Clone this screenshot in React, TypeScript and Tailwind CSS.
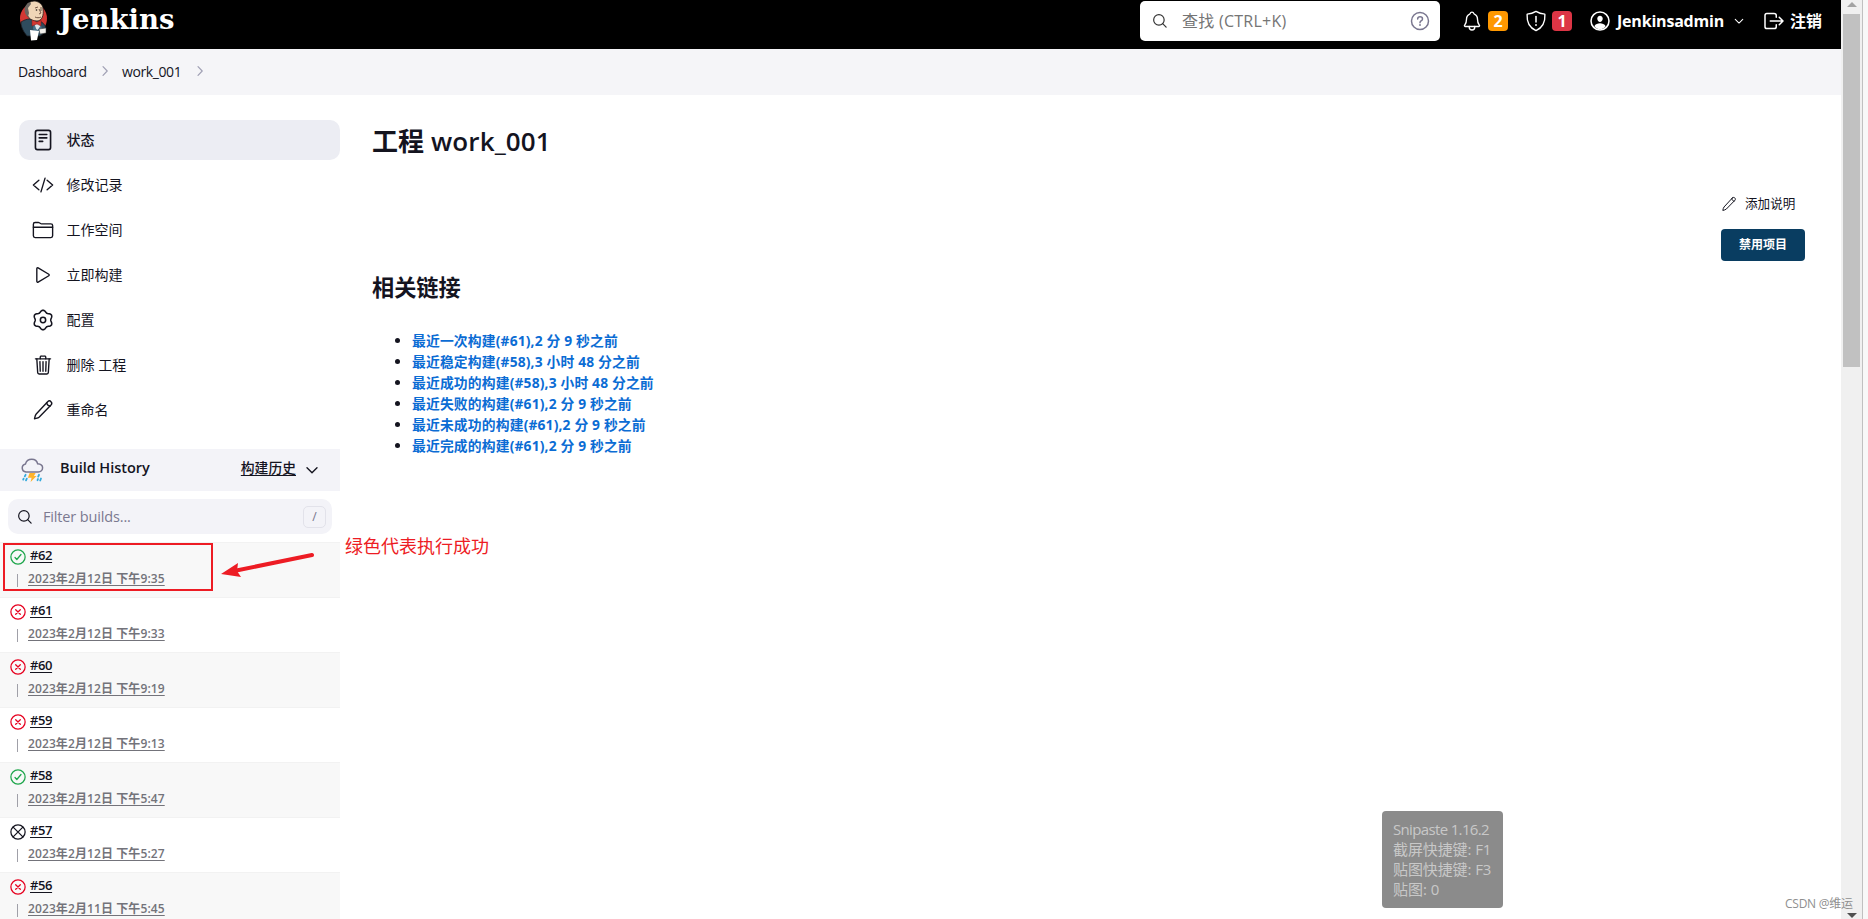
import type { ReactNode } from "react";
import { clsx } from "clsx";

type BuildStatus = "success" | "failed" | "aborted";

const tasks = [
  { label: "状态", icon: "status", active: true },
  { label: "修改记录", icon: "changes" },
  { label: "工作空间", icon: "folder" },
  { label: "立即构建", icon: "play" },
  { label: "配置", icon: "gear" },
  { label: "删除 工程", icon: "trash" },
  { label: "重命名", icon: "pencil" },
];

const builds: { id: string; date: string; status: BuildStatus }[] = [
  { id: "#62", date: "2023年2月12日 下午9:35", status: "success" },
  { id: "#61", date: "2023年2月12日 下午9:33", status: "failed" },
  { id: "#60", date: "2023年2月12日 下午9:19", status: "failed" },
  { id: "#59", date: "2023年2月12日 下午9:13", status: "failed" },
  { id: "#58", date: "2023年2月12日 下午5:47", status: "success" },
  { id: "#57", date: "2023年2月12日 下午5:27", status: "aborted" },
  { id: "#56", date: "2023年2月11日 下午5:45", status: "failed" },
];

const links = [
  "最近一次构建(#61),2 分 9 秒之前",
  "最近稳定构建(#58),3 小时 48 分之前",
  "最近成功的构建(#58),3 小时 48 分之前",
  "最近失败的构建(#61),2 分 9 秒之前",
  "最近未成功的构建(#61),2 分 9 秒之前",
  "最近完成的构建(#61),2 分 9 秒之前",
];

// six-lobed outline of the settings gear
const gearPoints = Array.from({ length: 72 }, (_, i) => {
  const angle = (i * Math.PI) / 36;
  const radius = 204 - 24 * Math.cos(6 * angle);
  return `${(256 + radius * Math.cos(angle)).toFixed(1)},${(256 + radius * Math.sin(angle)).toFixed(1)}`;
}).join(" ");

function Symbol({ className, children, strokeWidth = 32 }: { className?: string; children: ReactNode; strokeWidth?: number }) {
  return (
    <svg
      viewBox="0 0 512 512"
      fill="none"
      stroke="currentColor"
      strokeWidth={strokeWidth}
      strokeLinecap="round"
      strokeLinejoin="round"
      className={clsx("shrink-0", className)}
    >
      {children}
    </svg>
  );
}

const shapes: Record<string, ReactNode> = {
  status: (
    <>
      <rect x="80" y="32" width="352" height="448" rx="48" strokeWidth="38" />
      <path d="M168 128h176M168 208h176M168 288h80" strokeWidth="38" />
    </>
  ),
  changes: <path d="M160 368L32 256l128-112M352 368l128-112-128-112M304 96l-96 320" />,
  folder: (
    <>
      <path d="M440 432H72a40 40 0 01-40-40V120a40 40 0 0140-40h75.89a40 40 0 0122.19 6.72l27.84 18.56a40 40 0 0022.19 6.72H440a40 40 0 0140 40v240a40 40 0 01-40 40z" />
      <path d="M32 192h448" />
    </>
  ),
  play: <path d="M112 111v290c0 17.44 17 28.52 31 20.16l247.9-148.37c12.12-7.25 12.12-26.33 0-33.58L143 90.84c-14-8.36-31 2.72-31 20.16z" strokeMiterlimit="10" />,
  gear: (
    <>
      <polygon points={gearPoints} strokeWidth="36" />
      <circle cx="256" cy="256" r="62" strokeWidth="36" />
    </>
  ),
  trash: (
    <>
      <path d="M112 112l20 320c.95 18.49 14.4 32 32 32h184c18.67 0 31-13.51 32-32l20-320" />
      <path d="M80 112h352M256 176v224M184 176l8 224M328 176l-8 224" />
      <path d="M192 112V72a23.93 23.93 0 0124-24h80a23.93 23.93 0 0124 24v40" />
    </>
  ),
  pencil: (
    <>
      <path d="M364 62c30-27 58-22 78 0 22 22 26 50 0 78L170 418c-30 28-70 30-112 44 12-44 12-82 40-112L364 62z" />
      <path d="M345 84c0 46 36 78 80 78" />
    </>
  ),
  chevronRight: <path d="M184 96l152 160-152 160" strokeWidth="44" />,
  chevronDown: <path d="M96 184l160 160 160-160" strokeWidth="44" />,
  search: (
    <>
      <circle cx="221" cy="221" r="168" strokeWidth="38" />
      <path d="M342 342L452 452" strokeWidth="38" />
    </>
  ),
  logout: (
    <path d="M304 336v40a40 40 0 01-40 40H104a40 40 0 01-40-40V136a40 40 0 0140-40h152c22.09 0 48 17.91 48 40v40M368 336l80-80-80-80M176 256h256" />
  ),
  bell: (
    <>
      <path d="M427.68 351.43C402 320 383.87 304 383.87 217.35 383.87 138 343.35 109.73 310 96c-4.43-1.82-8.6-6-9.95-10.55C294.2 65.54 277.8 48 256 48s-38.21 17.55-44 37.47c-1.35 4.6-5.52 8.71-9.95 10.53-33.39 13.75-73.87 41.92-73.87 121.35C128.13 304 110 320 84.32 351.43 73.68 364.45 83 384 101.61 384h308.88c18.51 0 27.77-19.61 17.19-32.57z" />
      <path d="M320 384v16a64 64 0 01-128 0v-16" />
    </>
  ),
  shield: (
    <>
      <path d="M463 112l-2-17c-78-6-145-27-205-63-60 36-127 57-205 63l-2 17c-9 167 54 302 207 368 153-66 216-201 207-368z" />
      <path d="M256 150v130" strokeWidth="36" />
      <circle cx="256" cy="348" r="22" fill="currentColor" stroke="none" />
    </>
  ),
};

function Icon({ name, className }: { name: string; className?: string }) {
  return <Symbol className={className}>{shapes[name]}</Symbol>;
}

function StatusIcon({ status }: { status: BuildStatus }) {
  const color = {
    success: "text-[#1ea64b]",
    failed: "text-[#e6001f]",
    aborted: "text-[#14141f]",
  }[status];

  return (
    <Symbol className={clsx("h-4 w-4", color)} strokeWidth={40}>
      <circle cx="256" cy="256" r="228" />
      {status === "success" && <path d="M352 176L218 336l-58-64" />}
      {status === "failed" && <path d="M330 330L182 182M330 182L182 330" />}
      {status === "aborted" && <path d="M412 412L100 100M412 100L100 412" />}
    </Symbol>
  );
}

function Butler() {
  return (
    <svg viewBox="0 0 30 41" className="h-[41px] w-[30px]">
      <ellipse cx="15.5" cy="18.5" rx="13.5" ry="15" fill="#d33833" />
      <path d="M3 22c3-2 6-3 9-3l9 2c4 1 6 4 7 7l-2 5-4 3H9c-3-4-6-8-6-14z" fill="#2f4c5e" stroke="#1a2026" strokeWidth=".8" />
      <path d="M14 20l5 3 3-1 1 5-3 3-3-1z" fill="#dfe6ea" />
      <path d="M16 23l3 8 4-6 1 5-5 4-4-5z" fill="#49728b" />
      <path d="M8 9c0-5 4-8 9-8 5 1 8 4 8 8 1 6-1 12-6 12-7 0-11-5-11-12z" fill="#f0d6b7" stroke="#241f1c" strokeWidth=".8" />
      <path d="M9 4c-3 3-3 7-1 11l2 2 1-4-1-5 3-4c0-2-3-2-4 0z" fill="#6b6560" />
      <path d="M17 8l3-1M22 8l2 0M21 9l2 4-2 1M17 17c2 1 4 1 6 0" fill="none" stroke="#54372a" strokeWidth=".8" />
      <circle cx="18.5" cy="10" r=".8" fill="#241f1c" />
      <circle cx="23" cy="10" r=".7" fill="#241f1c" />
      <path d="M14 20l5 2 4-2v6l-4-2-5 2z" fill="#d33833" stroke="#801b18" strokeWidth=".5" />
      <path d="M12 30l9 1-2 9-6 .5z" fill="#fff" />
      <path d="M21 29l7-1v5l-6 1z" fill="#f2f0eb" stroke="#333" strokeWidth=".5" />
    </svg>
  );
}

function StormIcon() {
  return (
    <svg viewBox="0 0 24 24" fill="none" className="h-6 w-6">
      <path
        d="M6 14a4.1 4.1 0 01-.5-8.1C6.2 3.1 8.5 1.2 11.8 1.2c3.1 0 5.2 1.9 5.8 4.5 3 .2 5 1.8 5 4.1S20.8 14 18.2 14z"
        stroke="#79768f"
        strokeWidth="1.5"
      />
      <path d="M9.6 15h6l-1.6 3h2.6l-6 6 1-4.2H7.9z" fill="#feb32b" />
      <path d="M5.6 16.8l-.8 1.6M6.8 20.6l-.8 1.8M3.6 20.6l-.4 1M19 16.8l-.8 1.8M21 20.5l-.8 2M18 21l-.5 1.2" stroke="#34aadc" strokeWidth="1.8" strokeLinecap="round" />
    </svg>
  );
}

function Header() {
  return (
    <header className="flex h-[49px] items-start justify-between bg-black text-white">
      <div className="flex pl-[18px]">
        <Butler />
        <span className="pt-px pl-[11px] font-['DejaVu_Serif',serif] text-[27.5px] leading-[36px] font-bold">
          Jenkins
        </span>
      </div>
      <div className="flex h-[41px] items-center pt-px pr-[19px]">
        <div className="flex h-10 w-[300px] items-center rounded-[5px] bg-white pr-[10px] pl-3 text-[#333]">
          <Icon name="search" className="h-4 w-4" />
          <span className="grow pl-[14px] text-[16px] tracking-[0.25px] text-[#757575]">查找 (CTRL+K)</span>
          <Symbol className="h-5 w-5 text-[#79768f]" strokeWidth={38}>
            <circle cx="256" cy="256" r="218" />
            <path d="M196 204c2-36 30-56 62-56 36 0 62 22 62 54 0 28-18 40-36 52-20 14-28 22-28 46" />
            <circle cx="256" cy="358" r="24" fill="currentColor" stroke="none" />
          </Symbol>
        </div>
        <Icon name="bell" className="ml-[21px] h-[22px] w-[22px]" />
        <span className="ml-[5px] flex h-5 w-5 items-center justify-center rounded-[4px] bg-[#ff9800] text-[16px] font-bold">2</span>
        <Icon name="shield" className="ml-[17px] h-[22px] w-[22px]" />
        <span className="ml-[5px] flex h-5 w-5 items-center justify-center rounded-[4px] bg-[#dc3545] text-[16px] font-bold">1</span>
        <Symbol className="ml-[18px] h-5 w-5" strokeWidth={40}>
          <circle cx="256" cy="256" r="230" />
          <path d="M256 120c42 0 74 34 70 80-3 44-34 80-70 80s-67-36-70-80c-4-46 28-80 70-80zM110 390c30-60 90-78 146-78s116 18 146 78c-40 50-90 76-146 76s-106-26-146-76z" fill="currentColor" stroke="none" />
        </Symbol>
        <span className="ml-[7px] w-[107px] text-[16px] font-bold tracking-[-0.2px]">Jenkinsadmin</span>
        <Icon name="chevronDown" className="ml-[9px] h-3 w-3" />
        <Icon name="logout" className="ml-[17px] h-[24px] w-[24px]" />
        <span className="ml-[4px] w-8 text-[16px] font-bold">注销</span>
      </div>
    </header>
  );
}

function Breadcrumbs() {
  return (
    <nav className="flex h-[46px] items-center bg-[#f5f5f8] pb-[2px] pl-[18px] text-[14px] tracking-[-0.4px]">
      <span className="w-[68px]">Dashboard</span>
      <Icon name="chevronRight" className="ml-[12px] h-[14px] w-[14px] text-[#a0a0b4]" />
      <span className="ml-[10px] w-[59px]">work_001</span>
      <Icon name="chevronRight" className="ml-[12px] h-[14px] w-[14px] text-[#a0a0b4]" />
    </nav>
  );
}

function BuildHistory() {
  return (
    <section>
      <div className="flex h-[42px] items-center bg-[#f3f3f8] pr-[20px] pl-5">
        <StormIcon />
        <h2 className="grow pb-[4px] pl-4 text-[14.5px] font-semibold tracking-[-0.05px]">Build History</h2>
        <a className="pb-[3px] text-[13.8px] font-medium underline underline-offset-2">构建历史</a>
        <Icon name="chevronDown" className="ml-[8px] h-4 w-4" />
      </div>
      <div className="mx-2 mt-2 mb-2 flex h-[35px] items-center rounded-[10px] bg-[#f3f3f8] pr-[6px] pl-[9px]">
        <Icon name="search" className="h-4 w-4" />
        <span className="grow pl-[10px] text-[14.5px] tracking-[-0.15px] text-[#7b7990]">Filter builds...</span>
        <kbd className="flex h-[22px] w-[23px] items-center justify-center rounded-[5px] border border-[#e2e2ea] font-sans text-[12px] text-[#7b7990]">
          /
        </kbd>
      </div>
      <div>
        {builds.map((build) => (
          <div key={build.id} className="h-[55px] border-t border-[#f2f2f2] pt-[4px] odd:bg-[#f8f8f8] even:bg-white">
            <div className="flex h-[23px] items-start pl-[10px]">
              <span className="pt-[2px]">
                <StatusIcon status={build.status} />
              </span>
              <a className="ml-1 text-[13px] leading-[17px] font-semibold tracking-[-0.4px] underline underline-offset-2">{build.id}</a>
            </div>
            <div className="flex items-start pl-[17px]">
              <span className="mt-[4px] h-[13px] w-px bg-[#a0a0a8]" />
              <a className="ml-[10px] text-[12px] leading-[18px] font-semibold tracking-[0.1px] text-[#73737a] underline underline-offset-2">
                {build.date}
              </a>
            </div>
          </div>
        ))}
      </div>
    </section>
  );
}

function Sidebar() {
  return (
    <aside className="w-[340px] shrink-0">
      <div className="flex h-[354px] flex-col gap-[5px] pt-[25px] pl-[19px]">
        {tasks.map((task) => (
          <a
            key={task.label}
            className={clsx(
              "flex h-10 w-[321px] shrink-0 items-center rounded-[10px] pl-[13px] text-[14px]",
              task.active && "bg-[#ecedf3] font-medium",
            )}
          >
            <Icon name={task.icon} className="h-[22px] w-[22px]" />
            <span className="pb-[2px] pl-[12.5px]">{task.label}</span>
          </a>
        ))}
      </div>
      <BuildHistory />
    </aside>
  );
}

function ProjectPage() {
  return (
    <main className="grow pr-9 pl-8">
      <h1 className="mt-[27px] h-[38px] text-[26px] leading-[38px] font-semibold tracking-[0.1px]">工程 work_001</h1>
      <div className="mt-[35px] flex flex-col items-end">
        <a className="flex h-[18px] w-[84px] items-center text-[12.6px]">
          <Icon name="pencil" className="h-4 w-4" />
          <span className="ml-2">添加说明</span>
        </a>
        <button className="mt-4 h-8 w-[84px] rounded-[4px] bg-[#093d61] text-[12px] font-bold text-white">禁用项目</button>
      </div>
      <h2 className="mt-[11px] h-8 text-[22.2px] leading-8 font-semibold">相关链接</h2>
      <ul className="mt-[26px] list-disc pl-10 text-[13.8px] leading-[21px] font-bold">
        {links.map((link) => (
          <li key={link}>
            <a className="tracking-[0.16px] text-[#0b6cd4]">{link}</a>
          </li>
        ))}
      </ul>
    </main>
  );
}

function Scrollbar() {
  return (
    <div className="flex h-full w-[27px] shrink-0">
      <div className="flex h-full w-[21px] flex-col items-center bg-[#f0f0f0]">
        <svg viewBox="0 0 10 14" className="h-[14px] w-[10px]">
          <path d="M0 7l5-5 5 5z" fill="#a3a3a3" />
        </svg>
        <div className="mr-[1px] h-[353px] w-[17px] bg-[#c1c1c1]" />
        <svg viewBox="0 0 10 8" className="mt-auto h-2 w-[10px]">
          <path d="M0 2h10L5 7z" fill="#505050" />
        </svg>
      </div>
      <div className="w-px bg-[#c0c0c0]" />
      <div className="grow bg-[#f8f8f8]" />
    </div>
  );
}

export default function App() {
  return (
    <div className="relative flex h-[919px] w-[1868px] overflow-hidden bg-white font-['Open_Sans','Noto_Sans_CJK_SC',sans-serif] text-[#14141f]">
      <div className="h-full grow overflow-hidden">
        <Header />
        <Breadcrumbs />
        <div className="flex">
          <Sidebar />
          <ProjectPage />
        </div>
      </div>
      <Scrollbar />

      {/* annotation on the latest build */}
      <div className="absolute top-[543px] left-[3px] h-[48px] w-[210px] border-2 border-[#ed1c24]" />
      <svg viewBox="0 0 100 30" className="absolute top-[550px] left-[218px] h-[30px] w-[100px]">
        <path d="M94 5L16 21" stroke="#ed1c24" strokeWidth="4" strokeLinecap="round" />
        <path d="M3 24L20 13l-1 8 4 6z" fill="#ed1c24" />
      </svg>
      <p className="absolute top-[534px] left-[345px] text-[18px] leading-6 text-[#ed1c24]">绿色代表执行成功</p>

      <div className="absolute top-[811px] left-[1382px] h-[97px] w-[121px] rounded-[4px] bg-[#8b8b8b] pt-[8px] pl-[11px] text-[15px] leading-5 whitespace-nowrap text-[#c8c8c8]">
        <p className="tracking-[-0.65px]">Snipaste 1.16.2</p>
        <p className="tracking-[-0.1px]">截屏快捷键: F1</p>
        <p className="tracking-[-0.1px]">贴图快捷键: F3</p>
        <p>贴图: 0</p>
      </div>
      <p className="absolute top-[896px] left-[1785px] text-[12px] leading-4 tracking-[-0.25px] whitespace-nowrap text-[#8f8f8f]">CSDN @维运</p>
    </div>
  );
}
